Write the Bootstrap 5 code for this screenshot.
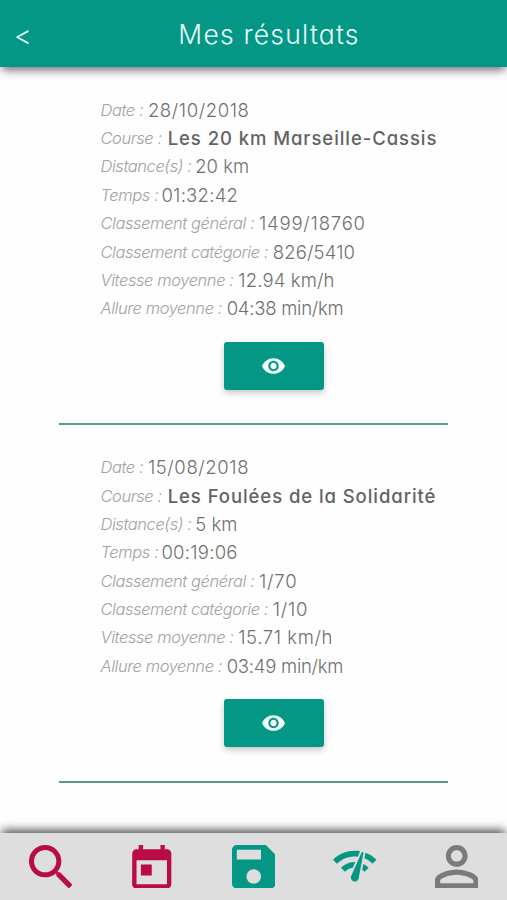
<!DOCTYPE html>
<html lang="fr">
<head>
<meta charset="utf-8">
<meta name="viewport" content="width=device-width, initial-scale=1">
<title>Mes résultats</title>
<link rel="stylesheet" href="https://cdn.jsdelivr.net/npm/bootstrap@5.3.0/dist/css/bootstrap.min.css">
<style>
body{font-family:Inter,Lato,sans-serif;font-feature-settings:"cv11";background:#fefefe;color:#777}
.topbar{height:67px;background:#049786;color:#e9fffb;box-shadow:0 5px 9px -2px rgba(45,20,40,.65);padding-top:3px}
.back-link{width:46px;padding-left:14px;font-size:27px;font-weight:300;color:inherit;line-height:1}
.page-title{font-size:26.5px;font-weight:330;letter-spacing:1.2px;padding-right:15px}
.result{width:389px;height:357.5px;margin-left:59px;padding:0 0 0 41.5px;border-bottom:2px solid #5a988f}
.results{padding-top:.6px}
.result dl{padding-top:28.2px}
.line{height:28.35px;line-height:28.35px}
.line dt{font-size:16.5px;font-style:italic;font-weight:300;color:#a2a2a2;letter-spacing:-.43px;margin-right:4.7px}
.line dd{font-size:18.5px;font-weight:320;letter-spacing:-.25px;color:#707070}
.line dd.num{letter-spacing:.6px}
.line dd.rank{letter-spacing:.8px}
.line dd.clock{letter-spacing:.25px;margin-left:-1.5px}
.line dd.speed{letter-spacing:.15px}
.line dd.dist{letter-spacing:0;margin-left:-1px}
.line dd.race{font-size:18.5px;font-weight:450;letter-spacing:.93px;padding-left:1.3px;color:#636363}
.btn-view{width:100px;height:48px;border-radius:3px;background:#049786;margin:19px 0 0 123.5px;box-shadow:0 3px 6px rgba(0,0,0,.22)}
.btn-view svg{margin-right:1.5px}
.tabs{height:67px;background:#dedede;box-shadow:0 -5px 9px -2px rgba(0,0,0,.7)}
.tabs svg{width:43.5px;height:43.5px}
.tab-red{color:#b90c46}.tab-green{color:#049786}.tab-gray{color:#7b7b7b}
</style>
<script src="https://cdn.jsdelivr.net/npm/bootstrap@5.3.0/dist/js/bootstrap.bundle.min.js"></script>
</head>
<body class="vh-100 overflow-hidden d-flex flex-column">
<header class="topbar d-flex align-items-center flex-shrink-0">
  <a class="back-link text-decoration-none" href="#">&lt;</a>
  <h1 class="page-title flex-grow-1 text-center mb-0">Mes résultats</h1>
</header>
<main class="results flex-grow-1">
  <article class="result">
    <dl class="mb-0">
      <div class="line d-flex text-nowrap"><dt>Date :</dt><dd class="num">28/10/2018</dd></div>
      <div class="line d-flex text-nowrap"><dt>Course :</dt><dd class="race">Les 20 km Marseille-Cassis</dd></div>
      <div class="line d-flex text-nowrap"><dt>Distance(s) :</dt><dd class="dist">20 km</dd></div>
      <div class="line d-flex text-nowrap"><dt>Temps :</dt><dd class="clock">01:32:42</dd></div>
      <div class="line d-flex text-nowrap"><dt>Classement général :</dt><dd class="rank">1499/18760</dd></div>
      <div class="line d-flex text-nowrap"><dt>Classement catégorie :</dt><dd class="speed">826/5410</dd></div>
      <div class="line d-flex text-nowrap"><dt>Vitesse moyenne :</dt><dd class="speed">12.94 km/h</dd></div>
      <div class="line d-flex text-nowrap"><dt>Allure moyenne :</dt><dd>04:38 min/km</dd></div>
    </dl>
    <button class="btn-view btn p-0 border-0 d-flex align-items-center justify-content-center" aria-label="Voir"><svg width="23" height="16" viewBox="1 4.5 22 15" fill="#f2fffd"><path d="M12 4.5C7 4.5 2.73 7.61 1 12c1.73 4.39 6 7.5 11 7.5s9.27-3.11 11-7.5c-1.73-4.39-6-7.5-11-7.5zM12 17c-2.76 0-5-2.24-5-5s2.24-5 5-5 5 2.24 5 5-2.24 5-5 5zm0-8c-1.66 0-3 1.34-3 3s1.34 3 3 3 3-1.34 3-3-1.34-3-3-3z"/></svg></button>
  </article>
  <article class="result">
    <dl class="mb-0">
      <div class="line d-flex text-nowrap"><dt>Date :</dt><dd class="num">15/08/2018</dd></div>
      <div class="line d-flex text-nowrap"><dt>Course :</dt><dd class="race">Les Foulées de la Solidarité</dd></div>
      <div class="line d-flex text-nowrap"><dt>Distance(s) :</dt><dd class="dist">5 km</dd></div>
      <div class="line d-flex text-nowrap"><dt>Temps :</dt><dd class="clock">00:19:06</dd></div>
      <div class="line d-flex text-nowrap"><dt>Classement général :</dt><dd class="rank">1/70</dd></div>
      <div class="line d-flex text-nowrap"><dt>Classement catégorie :</dt><dd class="rank">1/10</dd></div>
      <div class="line d-flex text-nowrap"><dt>Vitesse moyenne :</dt><dd class="num">15.71 km/h</dd></div>
      <div class="line d-flex text-nowrap"><dt>Allure moyenne :</dt><dd>03:49 min/km</dd></div>
    </dl>
    <button class="btn-view btn p-0 border-0 d-flex align-items-center justify-content-center" aria-label="Voir"><svg width="23" height="16" viewBox="1 4.5 22 15" fill="#f2fffd"><path d="M12 4.5C7 4.5 2.73 7.61 1 12c1.73 4.39 6 7.5 11 7.5s9.27-3.11 11-7.5c-1.73-4.39-6-7.5-11-7.5zM12 17c-2.76 0-5-2.24-5-5s2.24-5 5-5 5 2.24 5 5-2.24 5-5 5zm0-8c-1.66 0-3 1.34-3 3s1.34 3 3 3 3-1.34 3-3-1.34-3-3-3z"/></svg></button>
  </article>
</main>
<nav class="tabs row g-0 align-items-center flex-shrink-0 text-center">
  <a class="col tab-red" href="#" aria-label="Recherche"><svg viewBox="3 3 17.49 17.49" fill="currentColor"><path d="M15.5 14h-.79l-.28-.27C15.41 12.59 16 11.11 16 9.5 16 5.91 13.09 3 9.5 3S3 5.91 3 9.5 5.91 16 9.5 16c1.61 0 3.09-.59 4.23-1.57l.27.28v.79l5 4.99L20.49 19l-4.99-5zm-6 0C7.01 14 5 11.99 5 9.5S7.01 5 9.5 5 14 7.01 14 9.5 11.99 14 9.5 14z"/></svg></a>
  <a class="col tab-red" href="#" aria-label="Calendrier"><svg viewBox="2 1 20 20" fill="currentColor"><path d="M19 3h-1V1h-2v2H8V1H6v2H5c-1.11 0-1.99.9-1.99 2L3 19c0 1.1.89 2 2 2h14c1.1 0 2-.9 2-2V5c0-1.1-.9-2-2-2zm0 16H5V8h14v11zM7 10h5v5H7z"/></svg></a>
  <a class="col tab-green" href="#" aria-label="Enregistrés"><svg viewBox="3 3 18 18" fill="currentColor"><path d="M17 3H5c-1.11 0-2 .9-2 2v14c0 1.1.89 2 2 2h14c1.1 0 2-.9 2-2V7l-4-4zm-5 16c-1.66 0-3-1.34-3-3s1.34-3 3-3 3 1.34 3 3-1.34 3-3 3zm3-10H5V5h10v4z"/></svg></a>
  <a class="col tab-green" href="#" aria-label="Performance"><svg viewBox="1 1.5 22 22" fill="currentColor"><path d="M15.9 5c-.17 0-.32.09-.41.23l-.07.15-5.18 11.65c-.16.29-.26.61-.26.96 0 1.11.9 2.01 2.01 2.01.96 0 1.77-.68 1.96-1.59l.01-.03L16.4 5.5c0-.28-.22-.5-.5-.5zM1 9l2 2c2.88-2.88 6.79-4.08 10.53-3.62l1.19-2.68C9.89 3.84 4.74 5.27 1 9zm20 2l2-2c-1.64-1.64-3.55-2.82-5.59-3.57l-.53 2.82c1.5.62 2.9 1.53 4.12 2.75zm-4 4l2-2c-.8-.8-1.7-1.42-2.66-1.89l-.55 2.92c.42.27.83.59 1.21.97zM5 13l2 2c1.13-1.13 2.56-1.79 4.03-2l1.28-2.88c-2.63-.08-5.3.87-7.31 2.88z"/></svg></a>
  <a class="col tab-gray" href="#" aria-label="Profil"><svg viewBox="4 4 16 16" fill="currentColor"><path d="M12 5.9c1.16 0 2.1.94 2.1 2.1s-.94 2.1-2.1 2.1S9.9 9.16 9.9 8s.94-2.1 2.1-2.1m0 9c2.97 0 6.1 1.46 6.1 2.1v1.1H5.9V17c0-.64 3.13-2.1 6.1-2.1M12 4C9.79 4 8 5.79 8 8s1.79 4 4 4 4-1.79 4-4-1.79-4-4-4zm0 9c-2.67 0-8 1.34-8 4v3h16v-3c0-2.66-5.33-4-8-4z"/></svg></a>
</nav>
</body>
</html>
